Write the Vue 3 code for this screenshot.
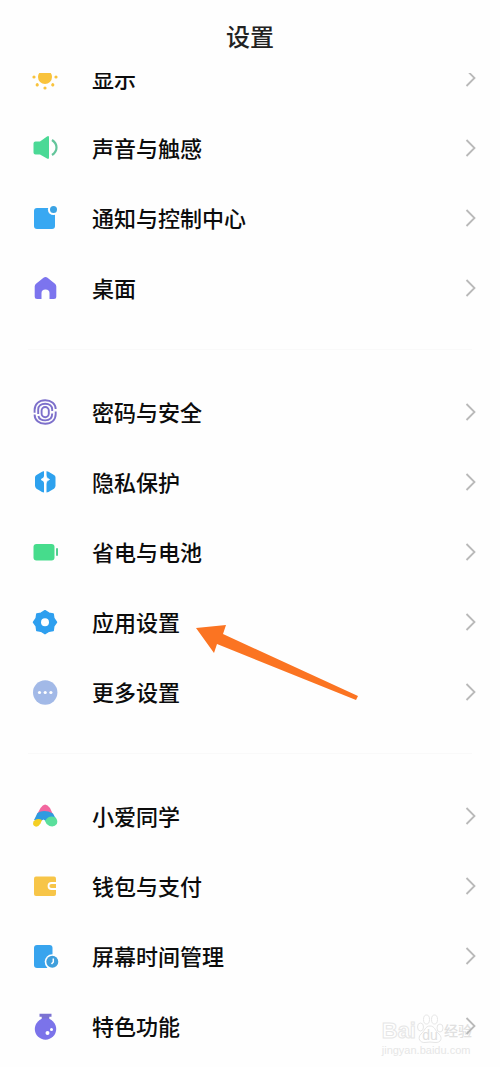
<script setup>
const groups = [
  [
    { icon: 'display', label: '显示' },
    { icon: 'sound', label: '声音与触感' },
    { icon: 'notice', label: '通知与控制中心' },
    { icon: 'home', label: '桌面' },
  ],
  [
    { icon: 'finger', label: '密码与安全' },
    { icon: 'privacy', label: '隐私保护' },
    { icon: 'battery', label: '省电与电池' },
    { icon: 'gear', label: '应用设置', pointed: true },
    { icon: 'more', label: '更多设置' },
  ],
  [
    { icon: 'assistant', label: '小爱同学' },
    { icon: 'wallet', label: '钱包与支付' },
    { icon: 'screentime', label: '屏幕时间管理' },
    { icon: 'flask', label: '特色功能' },
  ],
]
</script>

<template>
  <div class="page">
    <header class="header">
      <h1>设置</h1>
    </header>
    <main class="list">
      <nav class="scrolled">
        <ul v-for="(group, g) in groups" :key="g" class="group">
          <li v-for="item in group" :key="item.icon" class="item">
            <a href="#" class="row">
              <svg class="icon" viewBox="0 0 28 28" aria-hidden="true">
                <g v-if="item.icon === 'display'" fill="#f9c33c">
                  <circle cx="14" cy="13" r="7" />
                  <circle v-for="a in 8" :key="a" cx="25" cy="13" r="1.6" :transform="`rotate(${a * 45} 14 13)`" />
                </g>
                <g v-else-if="item.icon === 'sound'">
                  <path d="M4.5 7.5H9L16 2.4Q18 1.3 18 3.5V23.5Q18 25.7 16 24.6L9 20.5H4.5Q2.5 20.5 2.5 18.5V9.5Q2.5 7.5 4.500 7.500Z" fill="#4bd996" />
                  <path d="M21 6Q25.500 9 25.500 13.500T21 21" fill="none" stroke="#63c59b" stroke-width="2.200" />
                </g>
                <g v-else-if="item.icon === 'notice'">
                  <rect x="3" y="4" width="21" height="21" rx="3" fill="#38a8f2" />
                  <circle cx="22.500" cy="5.500" r="5.600" fill="#fff" />
                  <circle cx="22.500" cy="5.500" r="3.500" fill="#3ba3e4" />
                </g>
                <path v-else-if="item.icon === 'home'" d="M12.500 3.800Q14.500 2.300 16.500 3.800L24 9.800Q25.300 11 25.300 12.500V22.500Q25.300 25 22.800 25H18.500V19Q18.500 15.500 14.500 15.500T10.500 19V25H6.200Q3.700 25 3.700 22.500V12.500Q3.700 11 5 9.800Z" fill="#7c74ee" />
                <g v-else-if="item.icon === 'finger'" fill="none" stroke="#7d70cb" stroke-width="1.900">
                  <path d="M3.600 14.800V12C3.600 6 8 2.200 14.200 2.200S24.700 6 24.700 11" />
                  <path d="M24.700 13.500V16C24.700 22 20.500 25.800 14.200 25.800C8 25.800 3.600 22 3.600 16.500" />
                  <path d="M7.200 16V11.500C7.200 8 10 5.700 14.200 5.700S21.200 8 21.200 11.500V13" />
                  <path d="M21.200 15.500C21.200 20 18.500 22.400 14.200 22.400C10.500 22.400 8 20.800 7.400 18" />
                  <rect x="10.600" y="9" width="7.200" height="10.200" rx="3.600" />
                </g>
                <g v-else-if="item.icon === 'privacy'">
                  <path d="M13 3.200V24.500Q11 24.200 9 22.700L5.500 20.700Q4 19.500 4 17.800V9.500Q4 7.700 5.500 7L11 3.800Q12 3 13 3.200Z" fill="#2da1ee" />
                  <path d="M15.500 3.200V24.500Q17.500 24.200 19.500 22.700L23 20.700Q24.500 19.500 24.500 17.800V9.500Q24.500 7.700 23 7L17.500 3.800Q16.500 3 15.500 3.200Z" fill="#2da1ee" />
                  <path d="M14.250 6.500Q15.200 10.500 18.500 11.500Q15.200 12.500 14.250 16.500Q13.300 12.500 10 11.500Q13.300 10.500 14.250 6.500Z" fill="#fff" stroke="#fff" stroke-width=".8" />
                </g>
                <g v-else-if="item.icon === 'battery'">
                  <rect x="2.500" y="6" width="21" height="16.500" rx="3" fill="#46dc8c" />
                  <rect x="25" y="10" width="2" height="8" rx="1" fill="#4fcf8f" />
                </g>
                <g v-else-if="item.icon === 'gear'">
                  <path d="M14 2.700L18 5.200 22.200 6 22.800 10.300 25.500 14.200 22.800 18 22.200 22.400 18 23.200 14 25.700 10 23.200 5.800 22.400 5.200 18 2.500 14.200 5.200 10.300 5.800 6 10 5.200Z" fill="#2e9fef" stroke="#2e9fef" stroke-width="1.500" stroke-linejoin="round" />
                  <circle cx="14" cy="14.200" r="4" fill="#fff" />
                </g>
                <g v-else-if="item.icon === 'more'">
                  <circle cx="14.200" cy="14.500" r="12.200" fill="#a2b9e7" />
                  <circle v-for="x in [8.5, 14.2, 19.9]" :key="x" :cx="x" cy="14.500" r="1.600" fill="#fff" />
                </g>
                <g v-else-if="item.icon === 'assistant'">
                  <path d="M9.500 6Q14 -1 19 6L22.500 13.500H5.500Z" fill="#f2679f" />
                  <path d="M6.500 11Q13 7 22 11.500L25 17L17 20.500L12.500 17.500L8 20L3 18Z" fill="#2f9be0" />
                  <path d="M2.500 19.500Q6 15.500 11 18L9.500 21.500Q7.500 25 4.500 24.600Q1 23.500 2.500 19.500Z" fill="#f4cf24" />
                  <path d="M14 19Q18 12.500 24.500 15.500Q27.300 18.500 25.800 22Q23.500 25.500 18.500 24Q15 22.500 14 19Z" fill="#5adf9c" />
                </g>
                <g v-else-if="item.icon === 'wallet'">
                  <rect x="3" y="4.500" width="22" height="19.500" rx="2" fill="#f7c548" />
                  <path d="M26 11H20.500Q17.500 11 17.500 14T20.500 17H26" fill="none" stroke="#fff" stroke-width="1.800" />
                </g>
                <g v-else-if="item.icon === 'screentime'">
                  <rect x="3" y="3" width="18.500" height="23" rx="3" fill="#38a4ee" />
                  <circle cx="21.300" cy="19.800" r="7.600" fill="#fff" />
                  <circle cx="21.300" cy="19.800" r="6" fill="#3f9fdc" />
                  <path d="M22.300 16.500V20L20.500 22" fill="none" stroke="#fff" stroke-width="1.500" />
                </g>
                <g v-else-if="item.icon === 'flask'">
                  <path d="M8.500 1.700H20.500V4.700H18.300V8H10.700V4.700H8.500Z" fill="#7b72d2" />
                  <circle cx="14.500" cy="17" r="10.700" fill="#7b73ea" />
                  <circle cx="16.500" cy="21" r="2" fill="#fff" />
                  <circle cx="20.500" cy="17.500" r="1.500" fill="#fff" />
                </g>
              </svg>
              <span class="label">{{ item.label }}</span>
              <svg class="chevron" viewBox="0 0 12 20" aria-hidden="true">
                <path d="M1.500 2L9.500 10L1.500 18" />
              </svg>
            </a>
            <svg v-if="item.pointed" class="arrow" viewBox="0 0 164 78" aria-hidden="true">
              <path d="M1 6L31 3L28 12L163 74L161 78L22 22L19 31Z" />
            </svg>
          </li>
        </ul>
      </nav>
    </main>
    <div class="watermark">
      <div class="brand">
        <span>Bai</span>
        <svg class="paw" viewBox="0 0 28 30" aria-hidden="true">
          <ellipse cx="4.500" cy="13" rx="3" ry="4" />
          <ellipse cx="10.500" cy="5.500" rx="3" ry="4.500" />
          <ellipse cx="18.500" cy="5.500" rx="3" ry="4.500" />
          <ellipse cx="24" cy="14" rx="3" ry="4" />
          <path d="M14 12C9 12 9 17 5 20C1 24 4 29 9 28.500Q14 27.500 19 28.500C25 29 27 24 23 20C19 17 19 12 14 12Z" />
          <text x="14" y="26">du</text>
        </svg>
        <span class="cn">经验</span>
      </div>
      <div class="site">jingyan.baidu.com</div>
    </div>
  </div>
</template>

<style>
body {
  margin: 0;
  background: #fefefe;
}
</style>

<style scoped>
.page {
  position: relative;
  min-height: 100vh;
  overflow: hidden;
  background: #fefefe;
  color: #0c0c0c;
  font-family: "Noto Sans CJK SC", sans-serif;
}

.header {
  display: flex;
  justify-content: center;
  box-sizing: border-box;
  height: 73px;
  padding-top: 18px;
}

h1 {
  margin: 0;
  font-size: 24px;
  line-height: 36px;
  font-weight: 500;
  color: #222;
}

.list {
  overflow: hidden;
}

.scrolled {
  margin-top: -30px;
}

.group {
  margin: 0;
  padding: 0;
  list-style: none;
}

.group + .group::before {
  content: "";
  display: block;
  height: 1px;
  margin: 26px 28px 27px;
  background: #f9f9f9;
}

.item {
  position: relative;
}

.row {
  display: flex;
  align-items: center;
  height: 70px;
  padding: 0 23px 0 31px;
  color: inherit;
  text-decoration: none;
}

.icon {
  flex: none;
  width: 28px;
  height: 28px;
}

.label {
  flex: 1;
  margin-left: 33px;
  padding-bottom: 2px;
  font-size: 22px;
  line-height: 32px;
  font-weight: 500;
}

.chevron {
  position: relative;
  z-index: 2;
  flex: none;
  width: 12px;
  height: 20px;
  fill: none;
  stroke: #b9b9b9;
  stroke-width: 1.8;
}

.arrow {
  position: absolute;
  z-index: 1;
  left: 195px;
  top: 35px;
  width: 164px;
  height: 78px;
  fill: #fb7422;
}

.watermark {
  position: absolute;
  z-index: 1;
  right: 28px;
  bottom: 10px;
  color: #fff;
  font-family: "Liberation Sans", "Noto Sans CJK SC", sans-serif;
  -webkit-text-stroke: 1px #e6e6e6;
}

.brand {
  display: flex;
  align-items: flex-end;
  font-size: 22px;
  line-height: 26px;
  font-weight: 700;
}

.paw {
  width: 28px;
  height: 30px;
  fill: #fff;
  stroke: #e6e6e6;
}

.paw text {
  font-size: 14px;
  font-weight: 400;
  text-anchor: middle;
  fill: #e0e0e0;
  stroke: none;
  -webkit-text-stroke: 0;
}

.cn {
  font-size: 14px;
  font-weight: 500;
  color: #e0e0e0;
  -webkit-text-stroke: 0;
}

.site {
  font-size: 11px;
  line-height: 13px;
  color: #e6e6e6;
  -webkit-text-stroke: 0;
}
</style>
